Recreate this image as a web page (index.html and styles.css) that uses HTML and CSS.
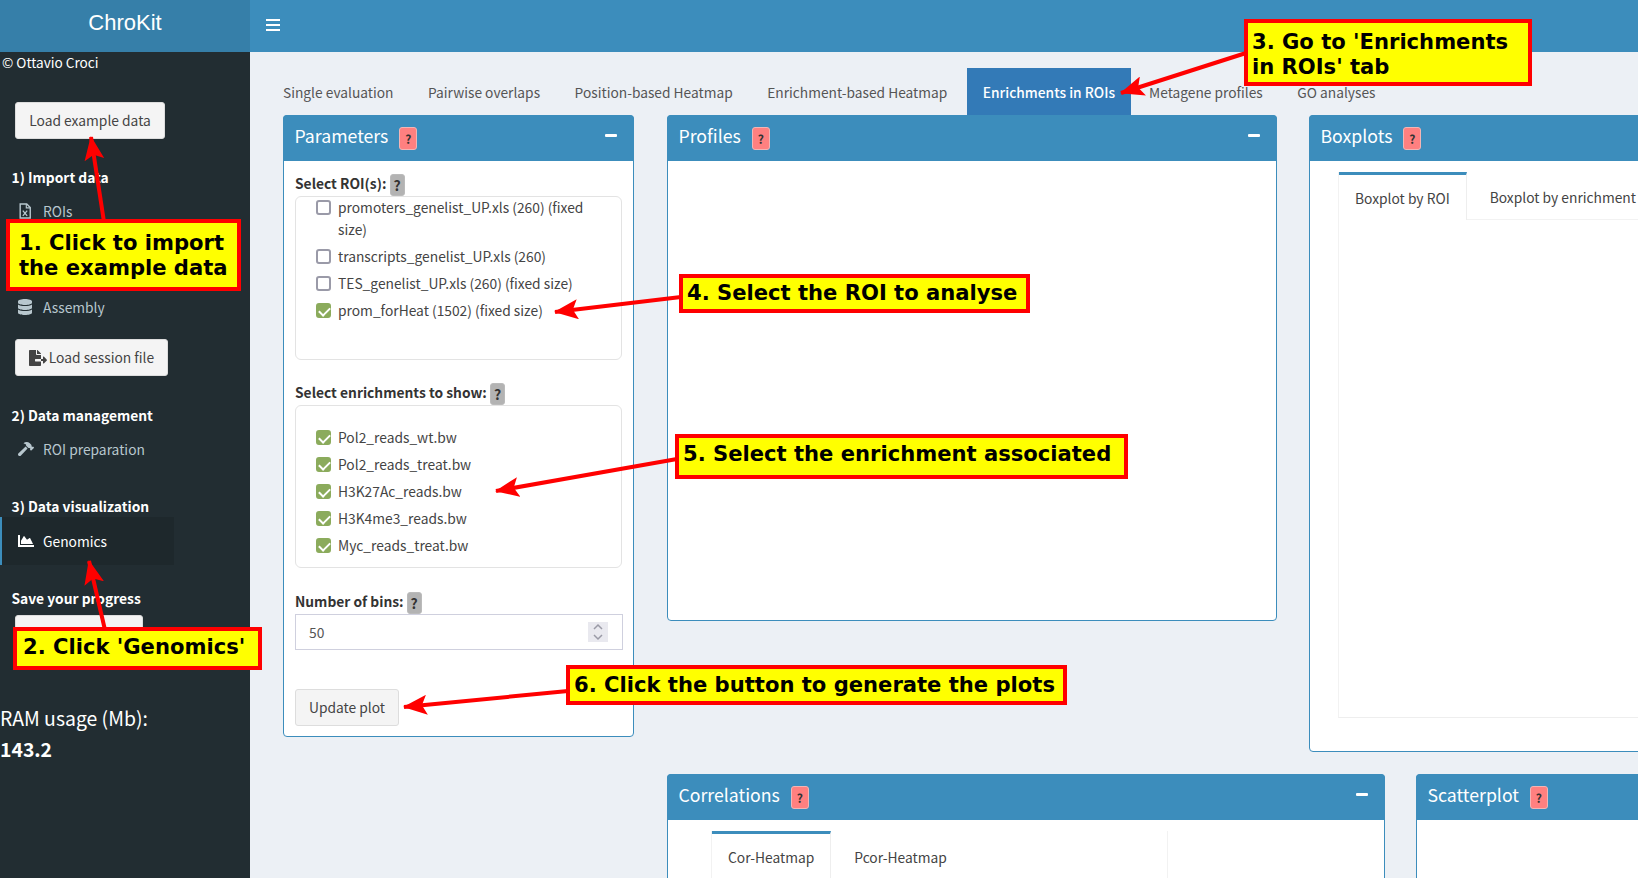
FILE: index.html
```html
<!DOCTYPE html>
<html lang="en">
<head>
<meta charset="utf-8">
<title>ChroKit</title>
<link rel="stylesheet" href="styles.css">
</head>
<body>
<div class="page">
  <aside class="sidebar">
    <div class="logo">ChroKit</div>
    <div class="credit">© Ottavio Croci</div>
    <button class="btn side-btn example">Load example data</button>
    <div class="side-head h-import">1) Import data</div>
    <div class="menu-item"><svg class="mi" viewBox="0 0 16 18"><path d="M2.5 1h7.5l4 4v12h-11.500z" fill="none" stroke="currentColor" stroke-width="1.600"/><path d="M9.500 1v4.500h4.500" fill="none" stroke="currentColor" stroke-width="1.300"/><path d="M5.500 8.500l5 6M10.500 8.500l-5 6" stroke="currentColor" stroke-width="1.500"/></svg><span>ROIs</span></div>
    <div class="menu-item"><svg class="mi" viewBox="0 0 448 512"></svg><span>Enrichments</span></div>
    <div class="menu-item"><svg class="mi" viewBox="0 0 448 512"><path fill="currentColor" d="M448 73.143v45.714C448 159.143 347.667 192 224 192S0 159.143 0 118.857V73.143C0 32.857 100.333 0 224 0s224 32.857 224 73.143zM448 176v102.857C448 319.143 347.667 352 224 352S0 319.143 0 278.857V176c48.125 33.143 136.208 48.572 224 48.572S399.874 209.143 448 176zm0 160v102.857C448 479.143 347.667 512 224 512S0 479.143 0 438.857V336c48.125 33.143 136.208 48.572 224 48.572S399.874 369.143 448 336z"/></svg><span>Assembly</span></div>
    <button class="btn side-btn session"><svg class="bi" viewBox="0 0 576 512"><path fill="currentColor" d="M384 121.900c0-6.300-2.500-12.400-7-16.900L279.100 7c-4.500-4.500-10.600-7-17-7H256v128h128zM571 308l-95.700-96.400c-10.100-10.100-27.400-3-27.400 11.300V288h-64v64h64v65.200c0 14.300 17.300 21.400 27.400 11.300L571 332c6.600-6.600 6.600-17.400 0-24zm-379 28v-32c0-8.800 7.200-16 16-16h176V160H248c-13.200 0-24-10.800-24-24V0H24C10.700 0 0 10.700 0 24v464c0 13.300 10.700 24 24 24h336c13.300 0 24-10.700 24-24V368H208c-8.800 0-16-7.200-16-16z"/></svg>Load session file</button>
    <div class="side-head h-manage">2) Data management</div>
    <div class="menu-item"><svg class="mi wide" viewBox="0 0 576 512"><path fill="currentColor" d="M571.310 193.940l-22.630-22.630c-6.250-6.250-16.380-6.250-22.630 0l-11.310 11.310-28.900-28.900c5.630-21.310.36-44.900-16.350-61.610l-45.250-45.250c-62.480-62.480-163.790-62.480-226.280 0l90.510 45.250v18.750c0 16.970 6.740 33.250 18.750 45.250l49.140 49.140c16.710 16.710 40.300 21.980 61.610 16.350l28.900 28.900-11.310 11.310c-6.250 6.250-6.250 16.380 0 22.630l22.630 22.630c6.250 6.250 16.380 6.250 22.630 0l90.510-90.510c6.230-6.240 6.230-16.370-.02-22.620zm-286.720-15.200c-3.700-3.700-6.840-7.790-9.850-11.950L19.640 404.960c-25.570 23.880-26.260 64.190-1.530 88.930s65.050 24.050 88.930-1.530l238.130-255.070c-3.960-2.910-7.900-5.870-11.440-9.410l-49.140-49.140z"/></svg><span>ROI preparation</span></div>
    <div class="side-head h-visual">3) Data visualization</div>
    <div class="menu-item active"><svg class="mi wide" viewBox="0 0 512 512"><path fill="currentColor" d="M500 384c6.600 0 12 5.400 12 12v40c0 6.600-5.400 12-12 12H12c-6.600 0-12-5.400-12-12V76c0-6.600 5.400-12 12-12h40c6.600 0 12 5.400 12 12v308h436zM372.700 159.500L288 216l-85.300-113.700c-5.100-6.800-15.500-6.300-19.900 1L96 248v104h384l-89.900-187.800c-3.200-6.500-11.400-8.700-17.400-4.700z"/></svg><span>Genomics</span></div>
    <div class="side-head h-save">Save your progress</div>
    <button class="btn side-btn save">Save session</button>
    <div class="ram">RAM usage (Mb):</div>
    <div class="ram-value">143.2</div>
  </aside>

  <main class="main">
    <header class="topbar"><span class="burger"><i></i><i></i><i></i></span></header>
    <div class="content">
      <nav class="tabs">
        <a>Single evaluation</a>
        <a>Pairwise overlaps</a>
        <a>Position-based Heatmap</a>
        <a>Enrichment-based Heatmap</a>
        <a class="current">Enrichments in ROIs</a>
        <a>Metagene profiles</a>
        <a>GO analyses</a>
      </nav>
      <div class="columns">
        <section class="box params">
          <div class="box-head"><h3>Parameters</h3><span class="q red">?</span><span class="minus"></span></div>
          <div class="box-body form">
            <div class="label l-roi">Select ROI(s): <span class="q gray">?</span></div>
            <div class="checks roi">
              <label class="check two-line"><span class="cb"></span><span>promoters_genelist_UP.xls (260) (fixed size)</span></label>
              <label class="check"><span class="cb"></span><span>transcripts_genelist_UP.xls (260)</span></label>
              <label class="check"><span class="cb"></span><span>TES_genelist_UP.xls (260) (fixed size)</span></label>
              <label class="check"><span class="cb on"></span><span>prom_forHeat (1502) (fixed size)</span></label>
            </div>
            <div class="label l-enrich">Select enrichments to show: <span class="q gray">?</span></div>
            <div class="checks enrich">
              <label class="check"><span class="cb on"></span><span>Pol2_reads_wt.bw</span></label>
              <label class="check"><span class="cb on"></span><span>Pol2_reads_treat.bw</span></label>
              <label class="check"><span class="cb on"></span><span>H3K27Ac_reads.bw</span></label>
              <label class="check"><span class="cb on"></span><span>H3K4me3_reads.bw</span></label>
              <label class="check"><span class="cb on"></span><span>Myc_reads_treat.bw</span></label>
            </div>
            <div class="label l-bins">Number of bins: <span class="q gray">?</span></div>
            <div class="number"><span>50</span><span class="spin"><svg viewBox="0 0 20 20"><path d="M6 7l4-4 4 4M6 13l4 4 4-4" fill="none" stroke="#9a9aa6" stroke-width="1.500"/></svg></span></div>
            <button class="btn update">Update plot</button>
          </div>
        </section>
        <div class="right">
          <div class="row first">
            <section class="box profiles">
              <div class="box-head"><h3>Profiles</h3><span class="q red">?</span><span class="minus"></span></div>
              <div class="box-body tall-a"></div>
            </section>
            <section class="box boxplots">
              <div class="box-head"><h3>Boxplots</h3><span class="q red">?</span></div>
              <div class="box-body tall-b">
                <div class="tabset">
                  <div class="subtabs"><a class="on">Boxplot by ROI</a><a>Boxplot by enrichment</a></div>
                </div>
              </div>
            </section>
          </div>
          <div class="row second">
            <section class="box correlations">
              <div class="box-head"><h3>Correlations</h3><span class="q red">?</span><span class="minus"></span></div>
              <div class="box-body tall-c">
                <div class="tabset short">
                  <div class="subtabs"><a class="on">Cor-Heatmap</a><a>Pcor-Heatmap</a></div>
                </div>
              </div>
            </section>
            <section class="box scatter">
              <div class="box-head"><h3>Scatterplot</h3><span class="q red">?</span></div>
              <div class="box-body tall-c"></div>
            </section>
          </div>
        </div>
      </div>
    </div>
  </main>

  <svg class="arrows" viewBox="0 0 1638 878" width="1638" height="878">
    <defs>
      <marker id="head" viewBox="0 0 24 20" refX="23" refY="10" markerWidth="24" markerHeight="20" markerUnits="userSpaceOnUse" orient="auto">
        <path d="M0 0L24 10L0 20L5 10z" fill="#ff0000"/>
      </marker>
    </defs>
    <g stroke="#ff0000" stroke-width="4" fill="none">
      <line x1="104" y1="222" x2="91" y2="137" marker-end="url(#head)"/>
      <line x1="105" y1="630" x2="89" y2="561" marker-end="url(#head)"/>
      <line x1="1246" y1="53" x2="1121" y2="93" marker-end="url(#head)"/>
      <line x1="681" y1="297" x2="555" y2="312" marker-end="url(#head)"/>
      <line x1="677" y1="459" x2="496" y2="491" marker-end="url(#head)"/>
      <line x1="568" y1="691" x2="404" y2="707" marker-end="url(#head)"/>
    </g>
  </svg>
  <div class="note n1">1. Click to import<br>the example data</div>
  <div class="note n2">2. Click 'Genomics'</div>
  <div class="note n3">3. Go to 'Enrichments<br>in ROIs' tab</div>
  <div class="note n4">4. Select the ROI to analyse</div>
  <div class="note n5">5. Select the enrichment associated</div>
  <div class="note n6">6. Click the button to generate the plots</div>
</div>
</body>
</html>
```
FILE: styles.css
```css
* { box-sizing: border-box; }
html, body { margin: 0; padding: 0; height: 100%; overflow: hidden; }
body { font-family: "Noto Sans CJK SC", "Noto Sans", sans-serif; font-size: 13.800px; color: #444; background: #ecf0f5; }
.page { position: relative; display: flex; width: 1638px; height: 878px; overflow: hidden; }

/* Sidebar */
.sidebar { flex: 0 0 250px; width: 250px; background: #222d32; color: #b8c7ce; }
.logo { height: 52px; background: #367fa9; color: #fff; font: 22px/46px "Liberation Sans", sans-serif; text-align: center; }
.credit { height: 20px; padding-left: 2px; color: #fff; line-height: 20px; font-size: 13.600px; }
.btn { display: block; font-family: inherit; font-size: 13.800px; color: #444; background: #f4f4f4; border: 1px solid #ddd; border-radius: 3px; height: 37px; padding: 0; line-height: 33px; }
.side-btn { margin-left: 15px; }
.example { width: 150px; margin-top: 30px; }
.session { width: 153px; margin-top: 8px; display: flex; align-items: center; justify-content: center; gap: 2px; }
.save { width: 128px; margin-top: 7px; }
.bi { width: 18px; height: 16px; color: #444; }
.side-head { color: #fff; font-weight: 700; font-size: 13.800px; line-height: 20px; padding-left: 11.500px; }
.h-import { margin-top: 28px; }
.h-manage { margin-top: 29px; }
.h-visual { margin-top: 23px; }
.h-save { margin-top: 23px; }
.menu-item { height: 48px; display: flex; align-items: center; padding-left: 18px; font-size: 13.800px; }
.mi { width: 14px; height: 16px; margin-right: 11px; color: #b8c7ce; flex: none; }
.mi.wide { width: 16px; margin-right: 9px; }
.active { width: 174px; background: #1e282c; color: #fff; border-left: 2px solid #3c8dbc; padding-left: 16px; margin-top: 1px; }
.active .mi { color: #fff; }
.ram { margin-top: 51px; color: #fff; font-size: 19.400px; line-height: 30px; }
.ram-value { color: #fff; font-size: 19.400px; font-weight: 700; line-height: 30px; margin-top: 1px; }

/* Main */
.main { flex: 1 1 auto; min-width: 0; }
.topbar { height: 52px; background: #3c8dbc; display: flex; align-items: center; padding-left: 16px; }
.burger { display: flex; flex-direction: column; gap: 3px; width: 14px; margin-top: -2px; }
.burger i { display: block; height: 2px; background: #fff; }
.content { padding: 16px 0 0 33px; }
.tabs { display: flex; height: 47px; margin-left: -15px; align-items: stretch; font-size: 13.750px; }
.tabs a { display: flex; align-items: center; padding: 0 15px; margin-right: 4.500px; color: #555; white-space: nowrap; }
.tabs a.current { background: #337ab7; color: #fff; font-weight: 500; padding: 0 16px; margin-right: 3px; }
.columns { display: flex; gap: 33px; align-items: flex-start; width: 1800px; }
.box { background: #fff; border: 1px solid #3c8dbc; border-radius: 4px; flex: none; }
.box-head { height: 46px; margin: -1px -1px 0; padding: 0 11.500px; background: #3c8dbc; color: #fff; display: flex; align-items: center; gap: 11px; border-radius: 4px 4px 0 0; position: relative; }
.box-head h3 { margin: 0; font-size: 17.700px; font-weight: 400; line-height: 1; position: relative; top: -2px; }
.q { display: inline-flex; align-items: center; justify-content: center; border-radius: 3px; font-weight: 700; color: #333; }
.q.red { width: 18px; height: 23px; background: #ff8080; border: 1px solid #f2b5b5; font-size: 12px; }
.q.gray { width: 15px; height: 22px; background: #b3b3b3; border: 1px solid #bbb; font-size: 14px; position: relative; top: 2px; }
.minus { position: absolute; right: 17px; top: 19px; width: 12px; height: 3px; background: #fff; border-radius: 1px; }
.params { width: 351px; }
.box-body.form { padding: 11px 11px 0 11px; height: 575px; }
.label { font-weight: 700; font-size: 13.800px; color: #333; height: 24px; line-height: 20px; white-space: nowrap; }
.checks { border: 1px solid #e3e3e3; border-radius: 6px; width: 327px; padding-left: 20px; padding-right: 10px; }
.roi { height: 164px; }
.enrich { height: 163px; padding-top: 20px; }
.l-enrich { margin-top: 21px; }
.l-bins { margin-top: 22px; }
.check { display: flex; align-items: flex-start; gap: 7px; font-size: 13.800px; line-height: 22px; color: #444; min-height: 27px; }
.roi .two-line { min-height: 49px; margin-top: -1px; }
.cb { flex: none; width: 15px; height: 15px; border: 2px solid #9a9aa8; border-radius: 3px; margin-top: 4px; position: relative; background: #fff; }
.cb.on { background: #8bab5c; border-color: #8bab5c; }
.cb.on::after { content: ""; position: absolute; left: 3px; top: 0; width: 5px; height: 9px; border: solid #fff; border-width: 0 2px 2px 0; transform: rotate(45deg); }
.number { display: flex; align-items: center; justify-content: space-between; width: 328px; height: 36px; border: 1px solid #cfd0de; padding: 0 14px 0 13px; font-size: 13.800px; color: #555; }
.spin { width: 20px; height: 20px; background: #e9e9ef; display: block; }
.spin svg { display: block; width: 20px; height: 20px; }
.update { width: 104px; margin-top: 39px; }
.right { flex: none; }
.row { display: flex; align-items: flex-start; }
.row.first { gap: 32px; }
.row.second { gap: 31px; margin-top: 22px; }
.profiles { width: 610px; }
.boxplots { width: 400px; }
.correlations { width: 718px; }
.scatter { width: 300px; }
.tall-a { height: 459px; }
.tall-b { height: 590px; padding: 11px 0 0 28px; }
.tall-c { height: 80px; padding: 11px 0 0 43px; }
.tabset { height: 546px; border-left: 1px solid #f2f2f2; border-bottom: 1px solid #eee; }
.tabset.short { height: 80px; width: 457px; border-right: 1px solid #f2f2f2; border-bottom: 0; }
.subtabs { display: flex; height: 48px; border-bottom: 1px solid #f2f2f2; font-size: 13.800px; }
.short .subtabs { border-bottom: 0; }
.subtabs a { display: flex; align-items: center; padding: 3px 16px 0; margin-right: 7px; color: #444; white-space: nowrap; }
.subtabs a.on { border-top: 3px solid #3c8dbc; border-right: 1px solid #eee; padding-top: 0; background: #fff; margin-bottom: -1px; }

/* Annotations on top of the screenshot */
.arrows { position: absolute; left: 0; top: 0; pointer-events: none; }
.note { position: absolute; background: #ffff00; border: 4px solid #ff0000; color: #000; font: 700 21.100px/25px "DejaVu Sans", sans-serif; white-space: nowrap; }
.n1 { left: 6px; top: 219px; width: 235px; height: 72px; padding: 7px 0 0 9px; }
.n2 { left: 13px; top: 627px; width: 249px; height: 43px; padding: 3px 0 0 6px; }
.n3 { left: 1244px; top: 19px; width: 288px; height: 67px; padding: 6px 0 0 4px; }
.n4 { left: 679px; top: 274px; width: 351px; height: 39px; padding: 2px 0 0 4px; }
.n5 { left: 675px; top: 434px; width: 453px; height: 45px; padding: 3px 0 0 4px; }
.n6 { left: 566px; top: 665px; width: 501px; height: 40px; padding: 3px 0 0 4px; }
```
